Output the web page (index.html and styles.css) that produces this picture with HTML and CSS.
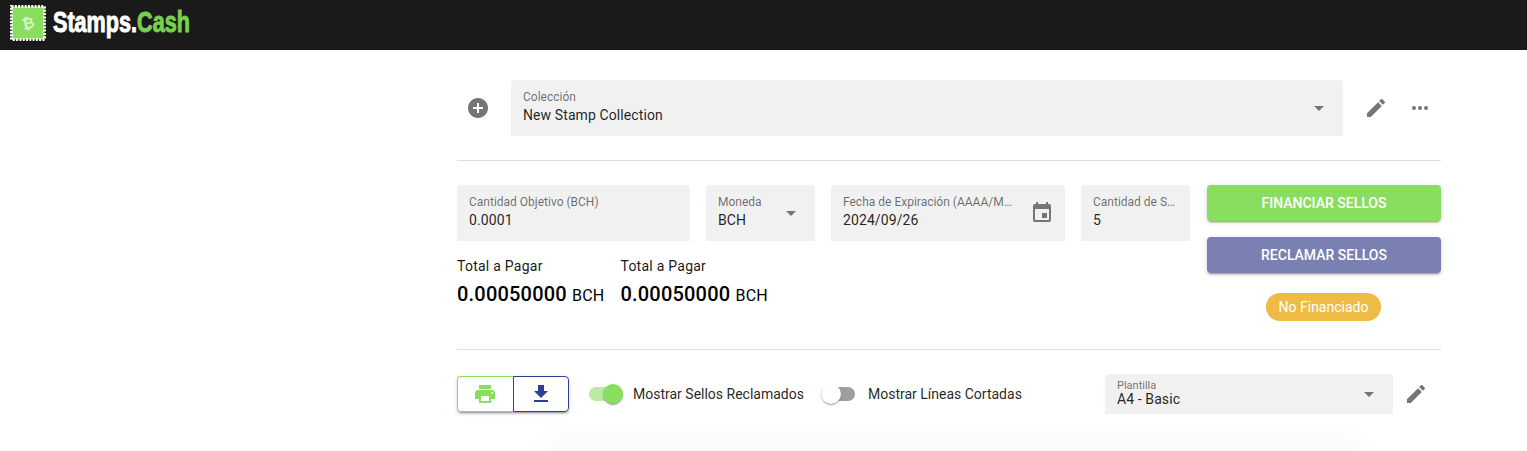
FILE: index.html
```html
<!DOCTYPE html>
<html lang="es">
	<head>
		<meta charset="UTF-8" />
		<meta name="viewport" content="width=device-width, initial-scale=1.0" />
		<title>Stamps.Cash</title>

		<link rel="stylesheet" href="styles.css">
	</head>
	<body>
		<header class="topbar">
			<svg class="logo_icon" viewBox="0 0 36 36" width="36" height="36">
				<rect x="1.5" y="1.5" width="33" height="33" fill="#8ade5f" stroke="#fff" stroke-width="3" stroke-dasharray="2 1.3" />
				<rect x="3" y="3" width="30" height="30" fill="#8ade5f" />
				<text x="18" y="23.5" text-anchor="middle" class="logo_btc" transform="rotate(-14 18 18)">₿</text>
			</svg>
			<div class="logo_text">Stamps.<span class="logo_green">Cash</span></div>
		</header>

		<main class="content">
			<section class="row_collection">
				<div class="icon_cell">
					<svg viewBox="0 0 24 24" width="24" height="24"><path fill="#757575" d="M12 2C6.48 2 2 6.48 2 12s4.48 10 10 10 10-4.48 10-10S17.52 2 12 2zm5 11h-4v4h-2v-4H7v-2h4V7h2v4h4v2z" /></svg>
				</div>
				<div class="field field_collection">
					<div class="field_body">
						<span class="field_label">Colección</span>
						<span class="field_value">New Stamp Collection</span>
					</div>
					<span class="caret"></span>
				</div>
				<div class="collection_actions">
					<svg viewBox="0 0 24 24" width="24" height="24"><path fill="#757575" d="M3 17.25V21h3.75L17.81 9.94l-3.75-3.75L3 17.25zM20.71 7.04a1 1 0 0 0 0-1.41l-2.34-2.34a1 1 0 0 0-1.41 0l-1.83 1.83 3.75 3.75 1.83-1.83z" /></svg>
					<svg viewBox="0 0 24 24" width="24" height="24"><path fill="#757575" d="M6 10a2 2 0 1 0 0 4 2 2 0 0 0 0-4zm12 0a2 2 0 1 0 0 4 2 2 0 0 0 0-4zm-6 0a2 2 0 1 0 0 4 2 2 0 0 0 0-4z" /></svg>
				</div>
			</section>

			<hr class="divider" />

			<section class="row_funding">
				<div class="funding_left">
					<div class="field_row">
						<div class="field field_amount">
							<div class="field_body">
								<span class="field_label">Cantidad Objetivo (BCH)</span>
								<span class="field_value">0.0001</span>
							</div>
						</div>
						<div class="field field_currency">
							<div class="field_body">
								<span class="field_label">Moneda</span>
								<span class="field_value">BCH</span>
							</div>
							<span class="caret"></span>
						</div>
						<div class="field field_date">
							<div class="field_body">
								<span class="field_label">Fecha de Expiración (AAAA/MM/DD)</span>
								<span class="field_value">2024/09/26</span>
							</div>
							<svg class="field_icon" viewBox="0 0 24 24" width="24" height="24"><path fill="#757575" d="M17 12h-5v5h5v-5zM16 1v2H8V1H6v2H5a2 2 0 0 0-2 2v14a2 2 0 0 0 2 2h14a2 2 0 0 0 2-2V5a2 2 0 0 0-2-2h-1V1h-2zm3 18H5V8h14v11z" /></svg>
						</div>
						<div class="field field_qty">
							<div class="field_body">
								<span class="field_label">Cantidad de Sellos</span>
								<span class="field_value">5</span>
							</div>
						</div>
					</div>
					<div class="totals">
						<div class="total">
							<div class="total_label">Total a Pagar</div>
							<div class="total_value">0.00050000 <small>BCH</small></div>
						</div>
						<div class="total">
							<div class="total_label">Total a Pagar</div>
							<div class="total_value">0.00050000 <small>BCH</small></div>
						</div>
					</div>
				</div>
				<div class="funding_actions">
					<button class="btn btn_green">Financiar Sellos</button>
					<button class="btn btn_indigo">Reclamar Sellos</button>
					<span class="chip">No Financiado</span>
				</div>
			</section>

			<hr class="divider" />

			<section class="row_print">
				<div class="btn_group">
					<button class="group_btn group_print">
						<svg viewBox="0 0 24 24" width="24" height="24"><path fill="#8ade5f" d="M19 8H5c-1.66 0-3 1.34-3 3v6h4v4h12v-4h4v-6c0-1.66-1.34-3-3-3zm-3 11H8v-5h8v5zm3-7a1 1 0 1 1 0-2 1 1 0 0 1 0 2zm-1-9H6v4h12V3z" /></svg>
					</button>
					<button class="group_btn group_download">
						<svg viewBox="0 0 24 24" width="24" height="24"><path fill="#303f8f" d="M19 9h-4V3H9v6H5l7 7 7-7zM5 18v2h14v-2H5z" /></svg>
					</button>
				</div>
				<label class="switch switch_on">
					<span class="switch_track"><span class="switch_thumb"></span></span>
					<span class="switch_text">Mostrar Sellos Reclamados</span>
				</label>
				<label class="switch">
					<span class="switch_track"><span class="switch_thumb"></span></span>
					<span class="switch_text">Mostrar Líneas Cortadas</span>
				</label>
				<div class="field field_template">
					<div class="field_body">
						<span class="field_label">Plantilla</span>
						<span class="field_value">A4 - Basic</span>
					</div>
					<span class="caret"></span>
				</div>
				<svg class="template_edit" viewBox="0 0 24 24" width="24" height="24"><path fill="#757575" d="M3 17.25V21h3.75L17.81 9.94l-3.75-3.75L3 17.25zM20.71 7.04a1 1 0 0 0 0-1.41l-2.34-2.34a1 1 0 0 0-1.41 0l-1.83 1.83 3.75 3.75 1.83-1.83z" /></svg>
			</section>

			<div class="sheet"></div>
		</main>
	</body>
</html>
```

FILE: styles.css
```css
* {
	padding: 0;
	margin: 0;
	border: 0;
	box-sizing: border-box;
}

html,
body {
	height: 451px;
	overflow: hidden;
}

body {
	background-color: #fff;
	color: rgba(0, 0, 0, 0.87);
	font-family: Roboto, "Liberation Sans", sans-serif;
	font-size: 14px;
}

.topbar {
	display: flex;
	align-items: center;
	gap: 7px;
	padding-left: 10px;
	height: 50px;
	background-color: #1a1a1a;
}

.logo_icon {
	flex: none;
	margin-top: -4px;
}

.logo_btc {
	fill: #d6f3c6;
	font-family: "DejaVu Sans", sans-serif;
	font-size: 15px;
	font-weight: bold;
}

.logo_text {
	margin-top: -6px;
	color: #fff;
	font-family: "Liberation Sans Narrow", "Liberation Sans", sans-serif;
	font-size: 30px;
	font-weight: bold;
	-webkit-text-stroke: 1px currentColor;
	transform: scaleX(0.72);
	transform-origin: left center;
	white-space: nowrap;
}

.logo_green {
	color: #78d04e;
}

.content {
	margin-left: 457px;
	padding-top: 30px;
	width: 984px;
}

.divider {
	height: 1px;
	background-color: #e0e0e0;
}

/* filled text field */
.field {
	display: flex;
	align-items: center;
	justify-content: space-between;
	padding: 0 12px;
	height: 56px;
	min-width: 0;
	background-color: #f1f1f1;
	border-radius: 4px 4px 0 0;
}

.field_body {
	display: flex;
	flex-direction: column;
	padding-bottom: 2px;
	min-width: 0;
	flex: 1;
}

.field_label {
	overflow: hidden;
	color: rgba(0, 0, 0, 0.56);
	font-size: 12px;
	line-height: 16px;
	text-overflow: ellipsis;
	white-space: nowrap;
}

.field_value {
	font-size: 14px;
	line-height: 20px;
	letter-spacing: 0.1px;
}

.caret {
	flex: none;
	margin-right: 7px;
	width: 0;
	height: 0;
	border-top: 5px solid #757575;
	border-left: 5px solid transparent;
	border-right: 5px solid transparent;
}

.row_collection {
	display: flex;
	align-items: center;
	margin-bottom: 24px;
}

.icon_cell {
	display: flex;
	justify-content: center;
	width: 41px;
	margin-right: 13px;
}

.field_collection {
	width: 832px;
}

.collection_actions {
	display: flex;
	align-items: center;
	gap: 20px;
	margin-left: 21px;
}

.row_funding {
	display: flex;
	justify-content: space-between;
	padding: 24px 0 28px;
}

.funding_left {
	width: 733px;
}

.field_row {
	display: flex;
	gap: 16px;
}

.field_amount {
	width: 233px;
}

.field_currency {
	width: 109px;
}

.field_date {
	width: 234px;
}

.field_date .field_body {
	padding-right: 10px;
}

.field_icon {
	flex: none;
	margin-left: 0;
	margin-right: -1px;
}

.field_qty {
	width: 109px;
}

.totals {
	display: flex;
	gap: 16px;
	margin-top: 16px;
}

.total_label {
	color: rgba(0, 0, 0, 0.92);
	font-size: 14px;
	line-height: 18px;
	letter-spacing: 0.25px;
}

.total_value {
	margin-top: 6px;
	color: #000;
	font-size: 20px;
	font-weight: 500;
	line-height: 26px;
	letter-spacing: 0.2px;
	white-space: nowrap;
}

.total_value small {
	font-size: 16px;
	font-weight: 400;
}

.funding_actions {
	display: flex;
	flex-direction: column;
	align-items: center;
	gap: 16px;
	width: 234px;
}

.btn {
	width: 100%;
	height: 36px;
	color: #fff;
	font-family: inherit;
	font-size: 14px;
	font-weight: 500;
	text-transform: uppercase;
	border-radius: 4px;
	box-shadow: 0 3px 1px -2px rgba(0, 0, 0, 0.2), 0 2px 2px 0 rgba(0, 0, 0, 0.14), 0 1px 5px 0 rgba(0, 0, 0, 0.12);
}

.btn_green {
	background-color: #8ade5f;
}

.btn_indigo {
	background-color: #7a80b2;
}

.chip {
	display: flex;
	align-items: center;
	justify-content: center;
	margin: 4px 1px 0 0;
	width: 115px;
	height: 28px;
	color: #fff;
	font-size: 14px;
	background-color: #eebb44;
	border-radius: 14px;
}

.row_print {
	display: flex;
	align-items: center;
	padding-top: 24px;
	height: 64px;
}

.btn_group {
	display: flex;
	border-radius: 4px;
	box-shadow: 0 3px 1px -2px rgba(0, 0, 0, 0.2), 0 2px 2px 0 rgba(0, 0, 0, 0.14), 0 1px 5px 0 rgba(0, 0, 0, 0.12);
}

.group_btn {
	display: flex;
	align-items: center;
	justify-content: center;
	width: 56px;
	height: 36px;
	background-color: #fff;
	border-style: solid;
	border-width: 1px;
}

.group_print {
	padding-right: 1px;
	border-color: #8ade5f;
	border-radius: 4px 0 0 4px;
	border-right: 0;
}

.group_download {
	border-color: #303f8f;
	border-radius: 0 4px 4px 0;
}

.switch {
	display: flex;
	align-items: center;
	gap: 10px;
	margin-left: 20px;
}

.switch + .switch {
	gap: 13px;
	margin-left: 17px;
}

.switch_track {
	position: relative;
	display: block;
	width: 34px;
	height: 14px;
	background-color: #9e9e9e;
	border-radius: 7px;
}

.switch_thumb {
	position: absolute;
	top: -3px;
	left: 0;
	width: 20px;
	height: 20px;
	background-color: #fff;
	border-radius: 50%;
	box-shadow: 0 2px 1px -1px rgba(0, 0, 0, 0.2), 0 1px 1px 0 rgba(0, 0, 0, 0.14), 0 1px 3px 0 rgba(0, 0, 0, 0.12);
}

.switch_on .switch_track {
	background-color: #bce9a4;
}

.switch_on .switch_thumb {
	left: 14px;
	background-color: #8ade5f;
}

.switch_text {
	white-space: nowrap;
}

.field_template {
	margin-left: auto;
	width: 288px;
	height: 40px;
	border-radius: 4px 4px 0 0;
}

.field_template .field_body {
	padding-bottom: 1px;
}

.field_template .field_label {
	font-size: 11px;
	line-height: 12px;
}

.field_template .field_value {
	margin-top: -1px;
	line-height: 16px;
}

.template_edit {
	flex: none;
	margin-left: 11px;
	margin-right: 13px;
}

.sheet {
	margin: 36px 0 0 100px;
	width: 792px;
	height: 1px;
	background-color: #fafafa;
	box-shadow: 0 0 26px 14px rgba(0, 0, 0, 0.025);
}
```
